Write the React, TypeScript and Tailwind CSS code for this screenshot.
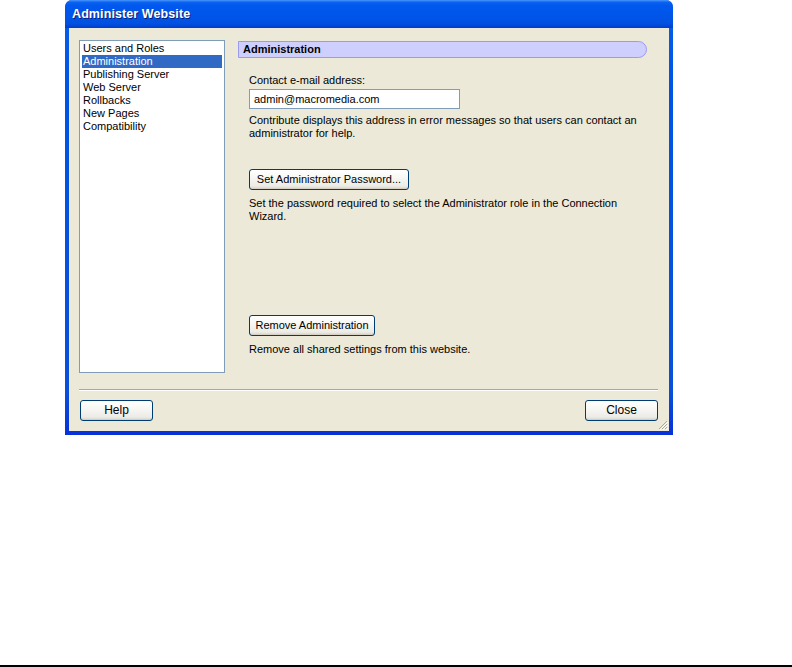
import React from "react";

const font = { fontFamily: '"Liberation Sans", Arial, sans-serif' };

function XPButton({ children, className = "" }: { children: React.ReactNode; className?: string }) {
  return (
    <button
      className={
        "h-[21px] rounded-[3px] border border-[#003c74] bg-[linear-gradient(to_bottom,#ffffff_0%,#f7f7f3_40%,#ecebe6_85%,#d6d0c5_100%)] text-[11px] leading-[19px] text-black shadow-[inset_0_-1px_0_#d6d0c5] " +
        className
      }
    >
      {children}
    </button>
  );
}

export default function App() {
  const items = [
    "Users and Roles",
    "Administration",
    "Publishing Server",
    "Web Server",
    "Rollbacks",
    "New Pages",
    "Compatibility",
  ];
  return (
    <div className="h-[667px] w-[792px] bg-white flex flex-col" style={font}>
      <div className="ml-[65px] w-[608px] h-[435px] rounded-t-[7px] bg-[linear-gradient(to_bottom,#0a5fe8,#0054e3_20%,#0a4fd8_90%,#0831d9)] flex flex-col overflow-hidden">
        <div className="h-[28px] shrink-0 flex items-center pl-[7px] pt-[1px] bg-[linear-gradient(to_bottom,#4a97ff_0%,#0b62f0_8%,#0058ee_20%,#0055e8_60%,#0150e0_85%,#003cc8_100%)]">
          <span className="text-white font-bold text-[12.5px] tracking-[0.1px] [text-shadow:1px_1px_0_#0a1e78]">
            Administer Website
          </span>
        </div>
        <div className="relative mx-[4px] mb-[4px] flex-1 bg-[#ece9d8] flex flex-col pt-[12px]">
          <div className="flex pl-[10px]">
            <div className="w-[146px] h-[333px] bg-white border border-[#7f9db9] pt-[1px] px-[2px]">
              {items.map((it) => (
                <div
                  key={it}
                  className={
                    "h-[13px] leading-[13px] text-[11px] pl-[1px] " +
                    (it === "Administration" ? "bg-[#316ac5] text-white" : "text-black")
                  }
                >
                  {it}
                </div>
              ))}
            </div>
            <div className="ml-[13px] w-[409px] pt-[1px] flex flex-col">
              <div className="h-[17px] bg-[#cfcffd] border border-[#9a9af2] rounded-r-full flex items-center pl-[4px]">
                <span className="font-bold text-[11px] text-black leading-[13px]">Administration</span>
              </div>
              <div className="pl-[11px] flex flex-col text-[11px] text-black">
                <div className="mt-[16px] h-[13px] leading-[13px]">Contact e-mail address:</div>
                <div className="mt-[2px] w-[211px] h-[20px] bg-white border border-[#7f9db9] pl-[4px] leading-[18px]">
                  admin@macromedia.com
                </div>
                <div className="mt-[5px] leading-[13px]">
                  Contribute displays this address in error messages so that users can contact an
                  <br />
                  administrator for help.
                </div>
                <div className="mt-[29px]">
                  <XPButton className="w-[160px]">Set Administrator Password...</XPButton>
                </div>
                <div className="mt-[7px] leading-[13px]">
                  Set the password required to select the Administrator role in the Connection
                  <br />
                  Wizard.
                </div>
                <div className="mt-[92px]">
                  <XPButton className="w-[126px]">Remove Administration</XPButton>
                </div>
                <div className="mt-[7px] leading-[13px]">Remove all shared settings from this website.</div>
              </div>
            </div>
          </div>
          <div className="mt-[16px] ml-[10px] mr-[11px] flex flex-col">
            <div className="h-[1px] bg-[#aca899]" />
            <div className="h-[1px] bg-white" />
          </div>
          <div className="mt-[9px] flex justify-between pl-[11px] pr-[11px]">
            <XPButton className="w-[73px] text-[12px]">Help</XPButton>
            <XPButton className="w-[73px] text-[12px]">Close</XPButton>
          </div>
          <svg className="absolute right-[1px] bottom-[1px]" width="12" height="12" viewBox="0 0 12 12">
            <path d="M11 3 L3 11 M11 6 L6 11 M11 9 L9 11" stroke="#aca899" strokeWidth="1" />
            <path d="M12 4 L4 12 M12 7 L7 12 M12 10 L10 12" stroke="#ffffff" strokeWidth="1" />
          </svg>
        </div>
      </div>
      <div className="mt-auto h-[2px] bg-black" />
    </div>
  );
}
